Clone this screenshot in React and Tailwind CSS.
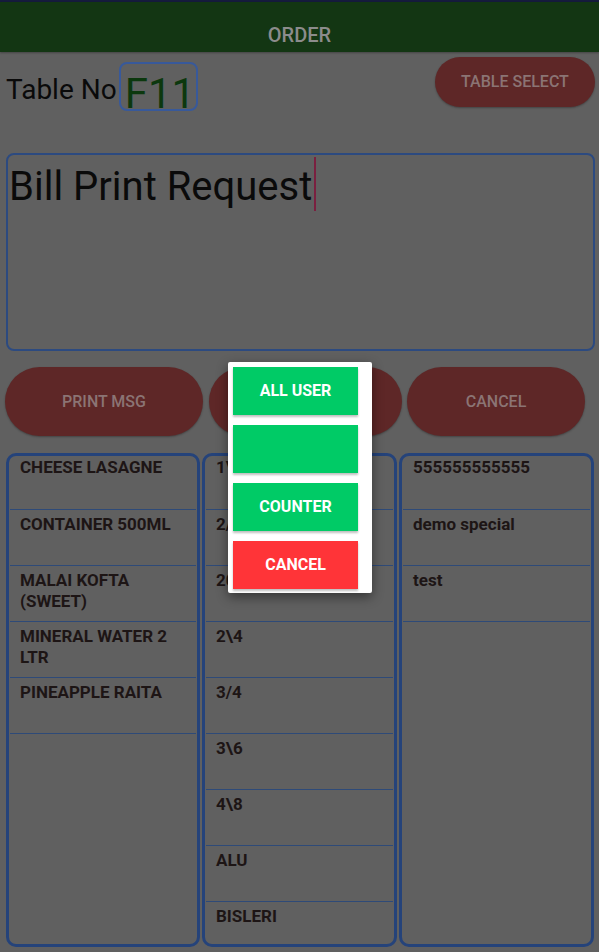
import React from 'react';

const col1 = ['CHEESE LASAGNE', 'CONTAINER 500ML', 'MALAI KOFTA (SWEET)', 'MINERAL WATER 2 LTR', 'PINEAPPLE RAITA', ''];
const col2 = ['1\\2', '2/3', '20', '2\\4', '3/4', '3\\6', '4\\8', 'ALU', 'BISLERI'];
const col3 = ['555555555555', 'demo special', 'test', ''];

function ItemColumn({ items, className }) {
  return (
    <div className={`h-[494px] border-[3px] border-[#25437a] rounded-[10px] overflow-hidden ${className}`}>
      <div className="-mt-[3px] mx-[1px]">
        {items.map((t, i) => (
          <div key={i} className={`h-[56px] pl-[10px] pr-[6px] pt-[4px] text-[17px] leading-[21px] font-bold text-[#1d1515] ${i > 0 ? 'border-t border-[#2e4a78]' : ''}`}>
            {t}
          </div>
        ))}
      </div>
    </div>
  );
}

export default function App() {
  return (
    <div className="relative w-[599px] h-[952px] overflow-hidden bg-[#606060]" style={{ fontFamily: 'Roboto, "Liberation Sans", sans-serif' }}>
      <div className="h-[2px] bg-[#151b3d]" />
      <div className="h-[50px] bg-[#133613] flex items-end justify-center pb-[5px] shadow-[0_1px_2px_rgba(0,0,0,0.3)]">
        <span className="text-[20px] leading-[24px] font-medium text-[#8c8c8c]">ORDER</span>
      </div>

      <div className="flex items-start h-[101px] pl-[6px] pr-[4px] pt-[5px]">
        <div className="flex items-start mt-[5px]">
          <span className="mt-[14px] text-[28px] leading-none text-[#0a0a0a]">Table No</span>
          <div className="ml-[2px] w-[79px] h-[49px] border-2 border-[#38599a] rounded-[8px] pl-[4px] pt-[9px]">
            <span className="text-[42px] leading-none text-[#0c380e]">F11</span>
          </div>
        </div>
        <button className="ml-auto w-[160px] h-[50px] rounded-full bg-[#5e2727] text-[16px] font-medium text-[#8b7474] shadow-[0_1px_2px_rgba(0,0,0,0.3)]">
          TABLE SELECT
        </button>
      </div>

      <div className="mx-[6px] w-[589px] h-[198px] border-2 border-[#2c4a80] rounded-[8px] pl-[1px]">
        <div className="flex items-start">
          <span className="mt-[12px] text-[40px] leading-none text-[#0a0a0a] whitespace-nowrap">Bill Print Request</span>
          <span className="ml-[2px] mt-[2px] w-[2px] h-[54px] bg-[#7a2040]" />
        </div>
      </div>

      <div className="flex mt-[16px] pl-[5px]">
        <button className="w-[198px] h-[69px] rounded-full bg-[#5e2727] text-[16px] font-medium text-[#8b7474] shadow-[0_1px_2px_rgba(0,0,0,0.3)]">PRINT MSG</button>
        <button className="ml-[6px] w-[193px] h-[69px] rounded-full bg-[#5e2727] shadow-[0_1px_2px_rgba(0,0,0,0.3)]" />
        <button className="ml-[5px] w-[178px] h-[69px] rounded-full bg-[#5e2727] text-[16px] font-medium text-[#8b7474] shadow-[0_1px_2px_rgba(0,0,0,0.3)]">CANCEL</button>
      </div>

      <div className="flex mt-[17px] pl-[6px]">
        <ItemColumn items={col1} className="w-[194px]" />
        <ItemColumn items={col2} className="ml-[2px] w-[195px]" />
        <ItemColumn items={col3} className="ml-[2px] w-[195px]" />
      </div>

      {/* popup dialog */}
      <div className="absolute left-[228px] top-[362px] w-[144px] h-[231px] bg-white rounded-[2px] shadow-[0_4px_12px_rgba(0,0,0,0.45)] pl-[5px] pt-[5px]">
        <div className="flex flex-col gap-[10px] w-[125px]">
          <button className="h-[48px] bg-[#00cb66] text-white font-bold text-[16px] shadow-[0_2px_2px_rgba(0,0,0,0.25)]">ALL USER</button>
          <button className="h-[48px] bg-[#00cb66] text-white font-bold text-[16px] shadow-[0_2px_2px_rgba(0,0,0,0.25)]"></button>
          <button className="h-[48px] bg-[#00cb66] text-white font-bold text-[16px] shadow-[0_2px_2px_rgba(0,0,0,0.25)]">COUNTER</button>
          <button className="h-[48px] bg-[#ff3438] text-white font-bold text-[16px] shadow-[0_2px_2px_rgba(0,0,0,0.25)]">CANCEL</button>
        </div>
      </div>
    </div>
  );
}
